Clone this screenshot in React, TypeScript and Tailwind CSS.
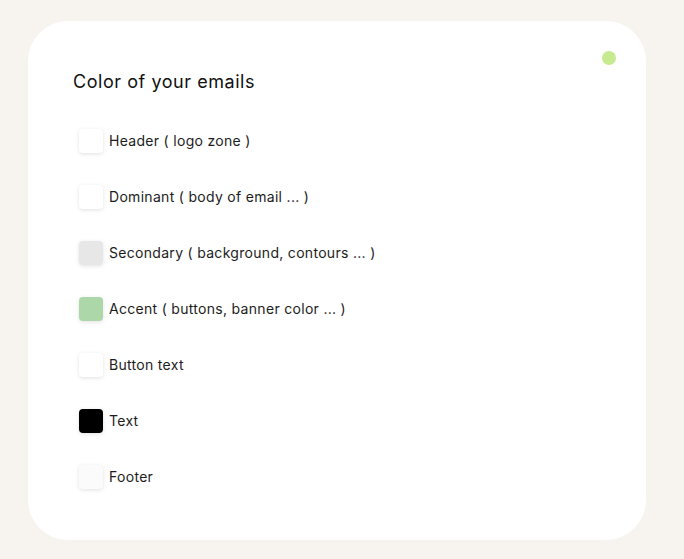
import React from "react";

const rows: { label: string; color: string }[] = [
  { label: "Header ( logo zone )", color: "bg-white" },
  { label: "Dominant ( body of email ... )", color: "bg-white" },
  { label: "Secondary ( background, contours ... )", color: "bg-[#e7e7e7]" },
  { label: "Accent ( buttons, banner color ... )", color: "bg-[#acd7a8]" },
  { label: "Button text", color: "bg-white" },
  { label: "Text", color: "bg-black" },
  { label: "Footer", color: "bg-[#fbfbfb]" },
];

export default function App() {
  return (
    <div
      className="w-[684px] h-[559px] bg-[#f7f4ef] pt-[21px] pl-[28px]"
      style={{ fontFamily: "Inter, 'Noto Sans', sans-serif" }}
    >
      <div className="relative w-[618px] h-[519px] bg-white rounded-[40px] pl-[45px] pt-[49px]">
        <div className="absolute left-[574px] top-[30px] w-[14px] h-[14px] rounded-full bg-[#c5ea8f]" />
        <h1 className="text-[18px] leading-[24px] tracking-[0.55px] text-[#111] font-normal">Color of your emails</h1>
        <div className="mt-[35px] flex flex-col gap-[32px] pl-[6px]">
          {rows.map((r) => (
            <div key={r.label} className="flex items-center gap-[6px] h-[24px]">
              <div className={`w-[24px] h-[24px] rounded-[4px] shadow-[0_1px_4px_rgba(0,0,0,0.12)] ${r.color}`} />
              <span className="text-[14px] leading-[20px] tracking-[0.3px] text-[#1c1c1c]">{r.label}</span>
            </div>
          ))}
        </div>
      </div>
    </div>
  );
}
